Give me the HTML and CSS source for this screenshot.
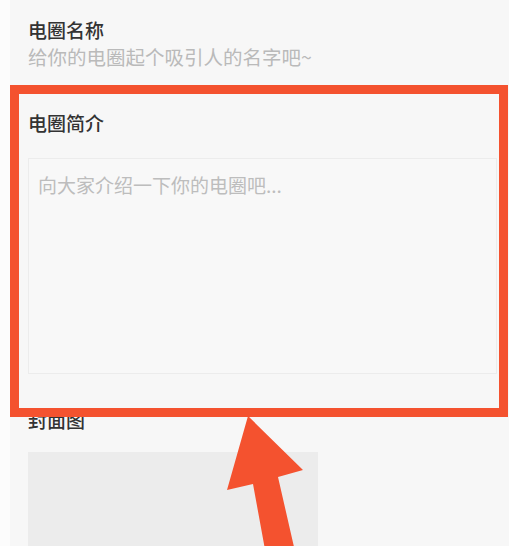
FILE: index.html
```html
<!DOCTYPE html>
<html lang="zh-CN">
<head>
    <meta charset="UTF-8">
    <meta name="viewport" content="width=device-width, initial-scale=1.0">
    <title>创建电圈</title>
    <link rel="stylesheet" href="styles.css">
</head>
<body>
    <div class="page">
        <!-- 名称 -->
        <div class="field field-name">
            <div class="field-title">电圈名称</div>
            <div class="field-hint">给你的电圈起个吸引人的名字吧~</div>
        </div>

        <!-- 简介 -->
        <div class="field field-intro">
            <div class="field-title">电圈简介</div>
            <div class="intro-box">
                <span class="intro-placeholder">向大家介绍一下你的电圈吧...</span>
            </div>
        </div>

        <!-- 封面图 -->
        <div class="field field-cover">
            <div class="field-title">封面图</div>
            <div class="cover-box"></div>
        </div>
    </div>

    <!-- annotation -->
    <div class="highlight"></div>
    <svg class="pointer" width="509" height="546" viewBox="0 0 509 546">
        <polygon points="248,416 303,470 278,477 297,560 268,566 253,484 227,490" fill="#f4522f"/>
    </svg>
</body>
</html>
```

FILE: styles.css
```css
body{
    margin: 0;
    padding: 0;
    background: #fcfcfc;
    font-family: "Noto Sans CJK SC", "Noto Sans", sans-serif;
    height: 546px;
    overflow: hidden;
    position: relative;
}
.page{
    margin-left: 10px;
    background: #f7f7f7;
    padding: 17px 12px 0 18px;
    min-height: 546px;
    box-sizing: border-box;
}
.field-title{
    font-size: 19px;
    line-height: 25px;
    color: #333;
    font-weight: 500;
}
.field-hint{
    margin-top: 2px;
    font-size: 19.5px;
    line-height: 25px;
    color: #bababa;
}
.field-intro{
    margin-top: 41px;
}
.intro-box{
    margin-top: 23px;
    height: 216px;
    box-sizing: border-box;
    border: 1px solid #ececec;
    background: #f8f8f8;
    padding: 13px 9px;
}
.intro-placeholder{
    font-size: 19px;
    line-height: 25px;
    color: #bdbdbd;
}
.field-cover{
    margin-top: 33px;
}
.cover-box{
    margin-top: 20px;
    width: 290px;
    height: 120px;
    background: #ececec;
}
.highlight{
    position: absolute;
    left: 10px;
    top: 85px;
    width: 498px;
    height: 332px;
    box-sizing: border-box;
    border: 9px solid #f4522f;
}
.pointer{
    position: absolute;
    left: 0;
    top: 0;
}
```
